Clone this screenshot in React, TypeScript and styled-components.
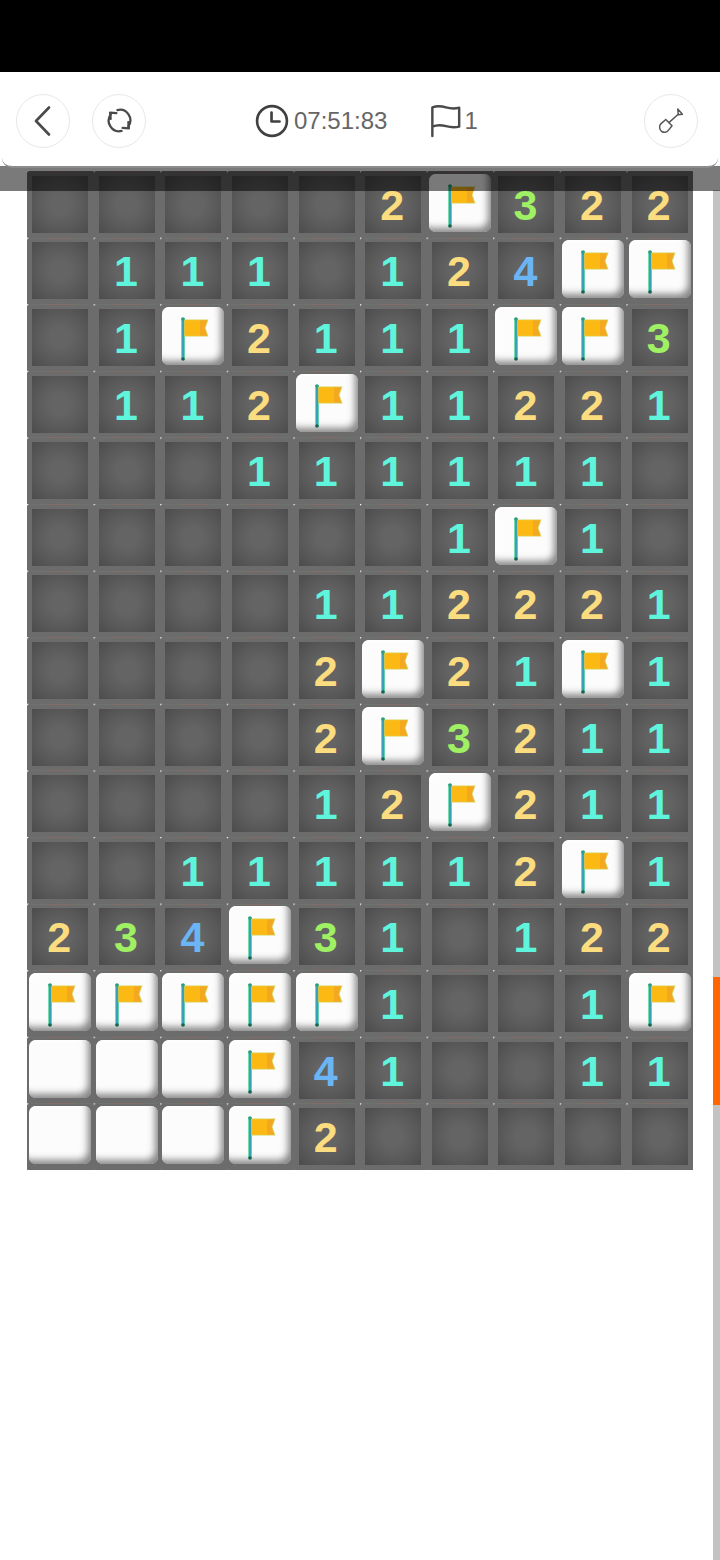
import React from 'react';
import styled, { createGlobalStyle } from 'styled-components';

const GlobalStyle = createGlobalStyle`
  html, body {
    margin: 0;
    padding: 0;
    background: #fff;
    overflow: hidden;
  }
  * {
    box-sizing: border-box;
  }
`;

const Page = styled.div`
  position: relative;
  width: 720px;
  height: 1560px;
  overflow: hidden;
  background: #fff;
  font-family: "Liberation Sans", Arial, sans-serif;
`;

const StatusBar = styled.div`
  height: 72px;
  background: #000;
`;

const Toolbar = styled.header`
  position: relative;
  z-index: 3;
  display: flex;
  align-items: center;
  height: 96px;
  margin: 0 2px;
  padding: 3px 20px 0 14px;
  background: #fff;
  border-bottom: 2px solid #8b8b8b;
  border-radius: 0 0 10px 10px;
`;

const RoundButton = styled.button`
  display: flex;
  align-items: center;
  justify-content: center;
  width: 54px;
  height: 54px;
  padding: 0;
  background: #fff;
  border: 1px solid #e8e8e8;
  border-radius: 50%;
  & + & {
    margin-left: 22px;
  }
`;

const Stats = styled.div`
  display: flex;
  align-items: center;
  margin-left: 109px;
  color: #666;
  font-size: 24px;
`;

const Stat = styled.div<{ $gap: number }>`
  display: flex;
  align-items: center;
  gap: ${(p) => p.$gap}px;
  & + & {
    margin-left: 43px;
  }
`;

const Spacer = styled.div`
  flex: 1;
`;

const Shade = styled.div`
  position: absolute;
  z-index: 2;
  top: 166px;
  left: 0;
  width: 100%;
  height: 25px;
  background: rgba(0, 0, 0, 0.52);
`;

const Board = styled.main`
  position: relative;
  display: grid;
  grid-template-columns: repeat(10, 66.6px);
  grid-auto-rows: 66.6px;
  width: 666px;
  margin: 3px 0 0 27px;
  background-color: #6c6c6c;
  background-image: radial-gradient(circle at 0 0, #f4f4f4 0, #f4f4f4 1.2px, transparent 1.8px);
  background-size: 66.6px 66.6px;
`;

const Slot = styled.div`
  position: relative;
  display: flex;
  align-items: center;
  justify-content: center;
  &::before {
    content: '';
    position: absolute;
    top: 0;
    left: 4px;
    width: 59px;
    height: 1px;
    background: linear-gradient(90deg, rgba(110, 130, 110, 0.35) 0 25%, rgba(170, 110, 100, 0.35) 25% 75%, rgba(110, 130, 110, 0.35) 75% 100%);
  }
`;

const Opened = styled.div<{ $color?: string }>`
  display: flex;
  align-items: center;
  justify-content: center;
  width: 56px;
  height: 57px;
  padding: 2px 2px 0 0;
  background: radial-gradient(circle, #646464 25%, #5a5a5a 60%, #4c4c4c 100%);
  color: ${(p) => p.$color || 'transparent'};
  font-size: 43px;
  font-weight: 700;
  line-height: 1;
`;

const Covered = styled.div`
  position: relative;
  z-index: 1;
  display: flex;
  align-items: center;
  justify-content: center;
  width: 62px;
  height: 58px;
  margin-bottom: 3px;
  background: #fcfcfc;
  border-radius: 7px;
  box-shadow:
    inset -5px -6px 7px -2px rgba(85, 85, 85, 0.7),
    inset 2px 2px 2px rgba(255, 255, 255, 0.9);
`;

const FlagGlyph = styled.svg`
  width: 28px;
  height: 44px;
  margin: 6px 0 0 4px;
`;

const Track = styled.div`
  position: absolute;
  top: 190px;
  right: 0;
  bottom: 0;
  width: 7px;
  background: #c3c3c3;
`;

const Thumb = styled.div`
  position: absolute;
  top: 787px;
  left: 0;
  width: 100%;
  height: 128px;
  background: #ff6600;
`;

const BackIcon = () => (
  <svg width="24" height="30" viewBox="0 0 24 30" fill="none">
    <path d="M18 1.500 5 15l13 13.500" stroke="#4a4a4a" strokeWidth="2.6" strokeLinecap="round" strokeLinejoin="round" />
  </svg>
);

const RestartIcon = () => (
  <svg width="25" height="25" viewBox="0 0 24 24" fill="none" stroke="#4a4a4a" strokeWidth="2.2" strokeLinecap="round" strokeLinejoin="round">
    <path d="M14 22A10 10 0 0 1 3.500 6.500" />
    <path d="M9 5 3 4.500l.5 6" />
    <path d="M10 2a10 10 0 0 1 10.500 15.500" />
    <path d="M15 19l6 .5-.5-6" />
  </svg>
);

const ClockIcon = () => (
  <svg width="34" height="34" viewBox="0 0 36 36" fill="none" stroke="#404040" strokeWidth="2.8" strokeLinecap="round" strokeLinejoin="round">
    <circle cx="18" cy="18" r="15.800" />
    <path d="M17.500 9v9.500H26" />
  </svg>
);

const OutlineFlag = () => (
  <svg width="32" height="36" viewBox="0 0 34 36" fill="none" stroke="#4a4a4a" strokeWidth="2.6" strokeLinecap="round" strokeLinejoin="round">
    <path d="M2.500 34V3.500C8 1.500 12 2 17 3.500c4.500 1.300 9 1.500 14 .5v20c-5 1-9 .8-14-.5-5-1.400-9-1.800-14.500.5" />
  </svg>
);

const ShovelIcon = () => (
  <svg width="25" height="25" viewBox="0 0 24 24" fill="none" stroke="#555" strokeWidth="1.400" strokeLinecap="round" strokeLinejoin="round">
    <path d="M6.500 11 1.500 15.500c-1.500 2-1 5.500 1 7s5 1 6.500-1l3.500-4.500Z" />
    <path d="M9.500 14 18.500 6" />
    <path d="M18 1l4.500 5-4 .5Z" />
  </svg>
);

const GameFlag = () => (
  <FlagGlyph viewBox="0 0 28 44" fill="none">
    <rect x="0" y="1" width="4" height="42" fill="#74dcae" />
    <rect x="1" y="2" width="2.200" height="40" fill="#3b9fb5" />
    <circle cx="2" cy="2" r="1.800" fill="#2f9c80" />
    <circle cx="2" cy="42" r="1.800" fill="#1f5f50" />
    <path d="M3.500 2.500H27.500L24.500 11l3 8.500H3.500Z" fill="#d6d45c" />
    <path d="M3.500 3.200H19V18.800H3.500Z" fill="#fdb913" />
    <path d="M19 3.200h7.300L23.500 11l2.800 7.800H19Z" fill="#f4a81f" />
  </FlagGlyph>
);

const digitColors: Record<string, string> = {
  '1': '#5ff4dc',
  '2': '#fbdc7e',
  '3': '#a0f064',
  '4': '#6bb5f4',
};

// . opened and empty, F flagged, W covered, digits are opened counts
const rows = [
  '.....2F322',
  '.111.124FF',
  '.1F2111FF3',
  '.112F11221',
  '...111111.',
  '......1F1.',
  '....112221',
  '....2F21F1',
  '....2F3211',
  '....12F211',
  '..111112F1',
  '234F31.122',
  'FFFFF1..1F',
  'WWWF41..11',
  'WWWF2.....',
];

const Cell = ({ value }: { value: string }) => {
  if (value === 'F' || value === 'W') {
    return (
      <Slot>
        <Covered>{value === 'F' && <GameFlag />}</Covered>
      </Slot>
    );
  }
  return (
    <Slot>
      <Opened $color={digitColors[value]}>{value === '.' ? '' : value}</Opened>
    </Slot>
  );
};

export default function App() {
  return (
    <Page>
      <GlobalStyle />
      <StatusBar />
      <Toolbar>
        <RoundButton aria-label="back">
          <BackIcon />
        </RoundButton>
        <RoundButton aria-label="restart">
          <RestartIcon />
        </RoundButton>
        <Stats>
          <Stat $gap={5}>
            <ClockIcon />
            <span>07:51:83</span>
          </Stat>
          <Stat $gap={2}>
            <OutlineFlag />
            <span>1</span>
          </Stat>
        </Stats>
        <Spacer />
        <RoundButton aria-label="dig">
          <ShovelIcon />
        </RoundButton>
      </Toolbar>
      <Shade />
      <Board>
        {rows.map((row, r) =>
          row.split('').map((value, c) => <Cell key={`${r}-${c}`} value={value} />)
        )}
      </Board>
      <Track>
        <Thumb />
      </Track>
    </Page>
  );
}
